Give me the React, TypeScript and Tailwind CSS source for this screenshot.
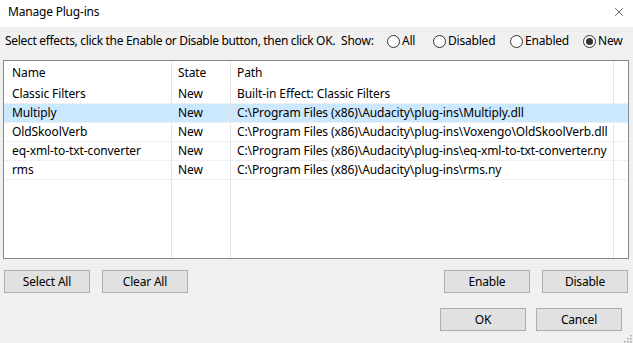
import { X } from 'lucide-react';

const rows = [
  { name: 'Classic Filters', state: 'New', path: 'Built-in Effect: Classic Filters' },
  { name: 'Multiply', state: 'New', path: 'C:\\Program Files (x86)\\Audacity\\plug-ins\\Multiply.dll', selected: true },
  { name: 'OldSkoolVerb', state: 'New', path: 'C:\\Program Files (x86)\\Audacity\\plug-ins\\Voxengo\\OldSkoolVerb.dll' },
  { name: 'eq-xml-to-txt-converter', state: 'New', path: 'C:\\Program Files (x86)\\Audacity\\plug-ins\\eq-xml-to-txt-converter.ny' },
  { name: 'rms', state: 'New', path: 'C:\\Program Files (x86)\\Audacity\\plug-ins\\rms.ny' },
];

const Radio = ({ label, checked, width }: { label: string; checked?: boolean; width: string }) => (
  <div className={`flex items-center ${width}`}>
    <span className="w-[13px] h-[13px] rounded-full border border-[#333333] bg-white flex items-center justify-center shrink-0">
      {checked && <span className="w-[7px] h-[7px] rounded-full bg-[#333333]" />}
    </span>
    <span className="ml-[2px] tracking-[-0.2px]">{label}</span>
  </div>
);

const Button = ({ children }: { children: string }) => (
  <button className="w-[86px] h-[23px] bg-[#e1e1e1] border border-[#adadad] text-black text-[12px] leading-none flex items-center justify-center tracking-[-0.2px]">
    {children}
  </button>
);

const Cells = ({ name, state, path }: { name?: string; state?: string; path?: string }) => (
  <>
    <div className="w-[168px] border-r border-[#e5e5e5] pl-[8px] flex items-center whitespace-nowrap overflow-hidden">{name}</div>
    <div className="w-[59px] border-r border-[#e5e5e5] pl-[6px] flex items-center">{state}</div>
    <div className="w-[383px] border-r border-[#e5e5e5] pl-[6px] flex items-center whitespace-nowrap overflow-hidden">{path}</div>
    <div className="flex-1" />
  </>
);

export default function App() {
  return (
    <div
      className="w-[633px] h-[343px] bg-[#f0f0f0] text-black text-[12px] tracking-[-0.1px] flex flex-col overflow-hidden"
      style={{ fontFamily: '"Noto Sans", "Open Sans", sans-serif' }}
    >
      <div className="h-[27px] bg-white flex items-start justify-between pl-[8px] pr-[7px] pt-[3px]">
        <span className="leading-[18px] tracking-[-0.2px]">Manage Plug-ins</span>
        <X className="w-[14px] h-[14px] mt-[2px] text-[#222]" strokeWidth={1.2} />
      </div>

      <div className="h-[28px] flex items-center pl-[5px]">
        <span className="w-[336px] whitespace-nowrap tracking-[-0.32px]">
          Select effects, click the Enable or Disable button, then click OK.
        </span>
        <span className="w-[46px] tracking-[-0.2px]">Show:</span>
        <Radio label="All" width="w-[46px]" />
        <Radio label="Disabled" width="w-[77px]" />
        <Radio label="Enabled" width="w-[73px]" />
        <Radio label="New" checked width="w-[40px]" />
      </div>

      <div className="pt-[5px] pl-[3px]">
        <div className="w-[626px] h-[199px] bg-white border border-[#828790] flex flex-col">
          <div className="h-[24px] flex shrink-0">
            <Cells name="Name" state="State" path="Path" />
          </div>
          {rows.map((r) => (
            <div
              key={r.name}
              className={`h-[19px] flex shrink-0 border-b border-[#f0f0f0] ${r.selected ? 'bg-[#cce8ff]' : ''}`}
            >
              <Cells name={r.name} state={r.state} path={r.path} />
            </div>
          ))}
          <div className="flex-1 flex">
            <Cells />
          </div>
        </div>
      </div>

      <div className="flex items-center pl-[4px] pr-[5px] mt-[11px]">
        <Button>Select All</Button>
        <div className="ml-[12px]">
          <Button>Clear All</Button>
        </div>
        <div className="flex-1" />
        <Button>Enable</Button>
        <div className="ml-[12px]">
          <Button>Disable</Button>
        </div>
      </div>

      <div className="flex items-start mt-[15px] pl-[440px]">
        <Button>OK</Button>
        <div className="ml-[10px]">
          <Button>Cancel</Button>
        </div>
        <div className="flex-1 flex justify-end self-stretch items-end pt-[26px]">
          <svg width="9" height="9" viewBox="0 0 9 9" className="mr-[1px]">
            {[
              [7, 1],
              [4, 4],
              [7, 4],
              [1, 7],
              [4, 7],
              [7, 7],
            ].map(([x, y]) => (
              <rect key={`${x}-${y}`} x={x} y={y} width="1.5" height="1.5" fill="#a0a0a0" />
            ))}
          </svg>
        </div>
      </div>
    </div>
  );
}
